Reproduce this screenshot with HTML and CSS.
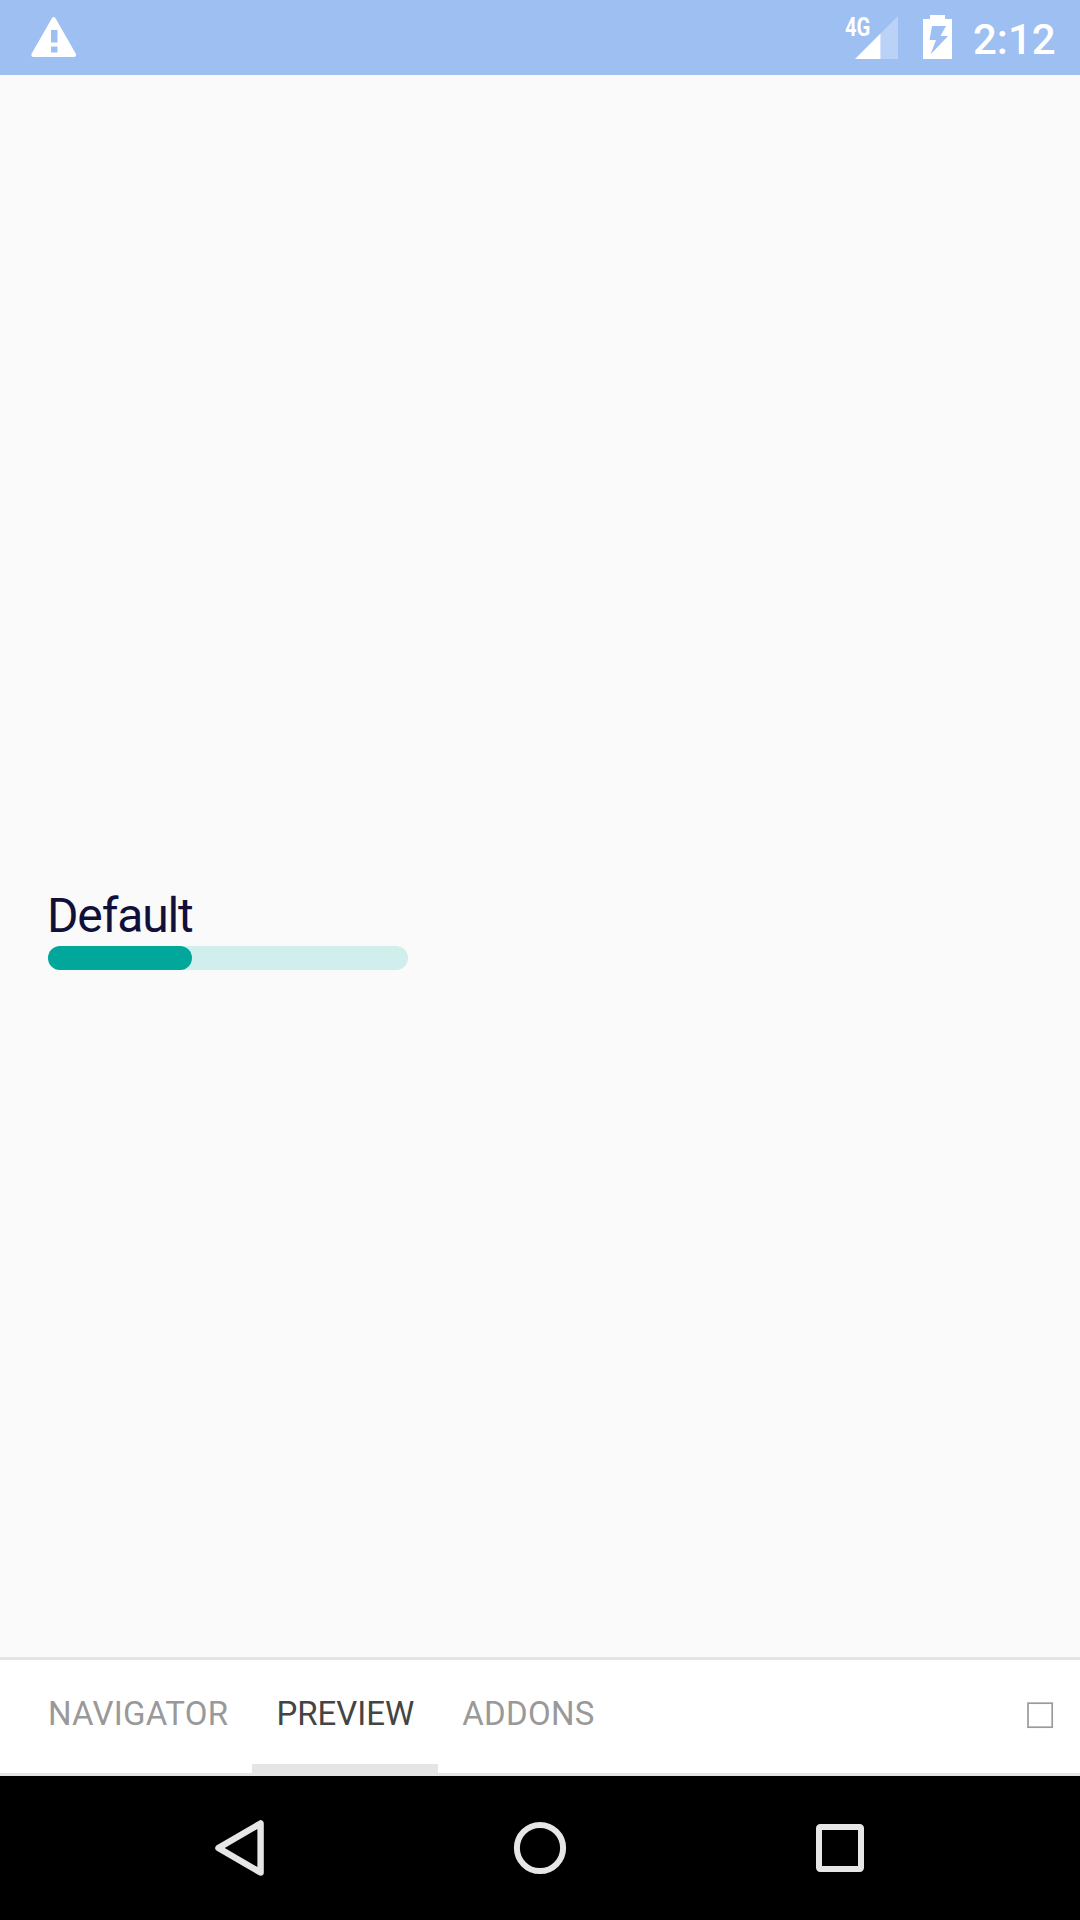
FILE: index.html
```html
<!DOCTYPE html>
<html lang="en">
<head>
<meta charset="utf-8">
<title>Preview</title>
<link rel="stylesheet" href="styles.css">
</head>
<body>
<div class="screen">
  <header class="status">
    <svg class="warning" width="46" height="42" viewBox="0 0 46 42"><path fill="#fff" fill-rule="evenodd" d="M20.9 2.2Q22.7 -.2 24.5 2.2L44.8 37.8Q45.8 40.9 43 41H2.4Q-.4 40.9 .6 37.8ZM20 14V26.5H26.5V14ZM20 30.5V36.5H26.5V30.5Z"/></svg>
    <div class="network">
      <span class="network-type">4G</span>
      <svg class="signal" width="43" height="43" viewBox="0 0 43 43"><path fill="#fff" fill-opacity=".3" d="M25.5 17.5L43 0V43H25.5Z"/><path fill="#fff" d="M0 43L25.5 17.5V43Z"/></svg>
    </div>
    <svg class="battery" width="29" height="44" viewBox="0 0 29 44"><path fill="#fff" fill-rule="evenodd" d="M0 4H7V0H22V4H29V44H0ZM9 11L6.5 25H13L7.5 39.5L25 21H17.5L23 11Z"/></svg>
    <time class="clock">2:12</time>
  </header>
  <main class="preview">
    <div class="label">Default</div>
    <div class="track"><div class="progress" style="width: 40%"></div></div>
  </main>
  <nav class="tabs">
    <div class="tab">NAVIGATOR</div>
    <div class="tab active">PREVIEW</div>
    <div class="tab">ADDONS</div>
    <svg class="toggle" width="27" height="27" viewBox="0 0 27 27"><rect x="1" y="1.2" width="24.2" height="24" fill="none" stroke="#9b9b9b" stroke-width="1.7"/></svg>
  </nav>
  <footer class="system">
    <svg width="60" height="60" viewBox="0 0 60 60"><path fill="none" stroke="#e6e6e6" stroke-width="6.4" stroke-linejoin="round" d="M8.4 30L50.6 5.4V54.6Z"/></svg>
    <svg width="60" height="60" viewBox="0 0 60 60"><circle cx="30" cy="30" r="23.1" fill="none" stroke="#e6e6e6" stroke-width="6"/></svg>
    <svg width="60" height="60" viewBox="0 0 60 60"><rect x="9" y="9" width="42" height="42" rx="1.2" fill="none" stroke="#e6e6e6" stroke-width="6"/></svg>
  </footer>
</div>
</body>
</html>
```
FILE: styles.css
```css
* { box-sizing: border-box; }
body { margin: 0; font-family: Roboto, sans-serif; background: #fafafa; }
svg { display: block; flex: none; }
.screen { width: 1080px; height: 1920px; display: flex; flex-direction: column; overflow: hidden; }
.status { height: 75px; flex: none; display: flex; align-items: flex-start; padding: 0 24px 0 31px; background: #9dbff2; color: #fff; }
.warning { margin-top: 16px; }
.network { display: flex; align-items: flex-start; margin-left: auto; margin-top: 16px; }
.network-type { width: 10px; height: 43px; font-size: 25px; line-height: 24px; font-weight: 700; transform: scaleX(.81); transform-origin: left; white-space: nowrap; }
.battery { margin: 15px 21px 0 25px; }
.clock { width: 83px; font-size: 42px; line-height: 50px; margin-top: 15px; font-weight: 500; white-space: nowrap; }
.preview { flex: 1; padding: 812px 47px 0; }
.label { height: 59px; font-size: 48px; line-height: 56px; letter-spacing: -1.15px; color: #10103a; padding-top: 1px; }
.track { width: 360px; height: 24px; margin-left: 1px; border-radius: 12px; background: #d0eeeb; }
.progress { height: 100%; border-radius: 12px; background: #00a79a; }
.tabs { height: 119px; flex: none; display: flex; padding: 0 26px 0 24px; background: #fff; border-top: 3px solid #e5e5e5; border-bottom: 3px solid #e5e5e5; }
.tab { padding: 34px 24px 0; font-size: 33px; line-height: 40px; letter-spacing: .25px; color: #999; border-bottom: 9px solid transparent; white-space: nowrap; }
.active { color: #444; border-color: #e5e5e5; letter-spacing: 0; }
.toggle { margin: 42px 0 0 auto; }
.system { height: 144px; flex: none; display: flex; justify-content: space-between; align-items: center; padding: 0 210px; background: #000; }
```
